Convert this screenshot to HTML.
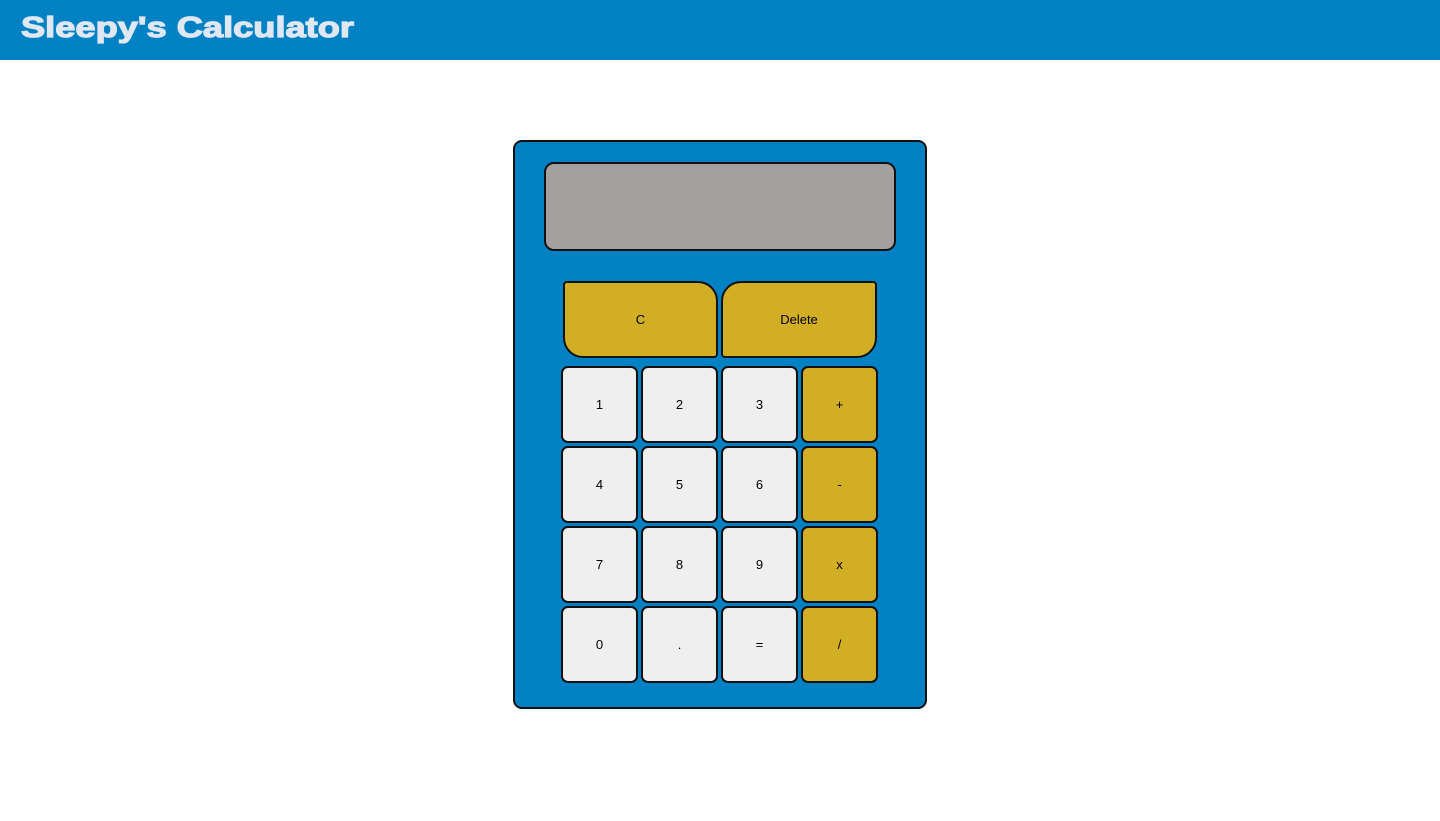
<!DOCTYPE html>
<html><head><style>
*{box-sizing:border-box;margin:0;padding:0}
body{width:1440px;height:821px;background:#fff;font-family:"Liberation Sans",Arial,sans-serif;position:relative;overflow:hidden}
header{position:absolute;left:0;top:0;width:1440px;height:60px;background:#0081c4}
header h1{position:absolute;left:21px;top:12px;font-size:29px;font-weight:900;color:#dfe7f3;letter-spacing:0px;font-family:"Liberation Sans",sans-serif;transform:scaleX(1.25);transform-origin:left;-webkit-text-stroke:1.2px #dfe7f3;white-space:nowrap}
.calc{position:absolute;left:513px;top:140px;width:414px;height:569px;background:#0081c4;border:2px solid #111;border-radius:9px}
.disp{position:absolute;left:544px;top:162px;width:352px;height:89px;background:#a4a09f;border:2px solid #111;border-radius:10px}
.k{position:absolute;width:77px;height:77px;border:2px solid #111;border-radius:7px;background:#efefef;display:flex;align-items:center;justify-content:center;font-size:13px;color:#000}
.y{background:#d2ae25}
.big{position:absolute;top:281px;height:77px;width:155px;border:2px solid #111;background:#d2ae25;display:flex;align-items:center;justify-content:center;font-size:13px}
</style></head><body>
<header><h1>Sleepy's Calculator</h1></header>
<div class="calc"></div>
<div class="disp"></div>
<div class="big" style="left:563px;border-radius:4px 20px 4px 20px">C</div>
<div class="big" style="left:721px;border-radius:20px 4px 20px 4px;width:156px">Delete</div>
<div class="k" style="left:561px;top:366px">1</div>
<div class="k" style="left:641px;top:366px">2</div>
<div class="k" style="left:721px;top:366px">3</div>
<div class="k y" style="left:801px;top:366px">+</div>
<div class="k" style="left:561px;top:446px">4</div>
<div class="k" style="left:641px;top:446px">5</div>
<div class="k" style="left:721px;top:446px">6</div>
<div class="k y" style="left:801px;top:446px">-</div>
<div class="k" style="left:561px;top:526px">7</div>
<div class="k" style="left:641px;top:526px">8</div>
<div class="k" style="left:721px;top:526px">9</div>
<div class="k y" style="left:801px;top:526px">x</div>
<div class="k" style="left:561px;top:606px">0</div>
<div class="k" style="left:641px;top:606px">.</div>
<div class="k" style="left:721px;top:606px">=</div>
<div class="k y" style="left:801px;top:606px">/</div>
</body></html>
